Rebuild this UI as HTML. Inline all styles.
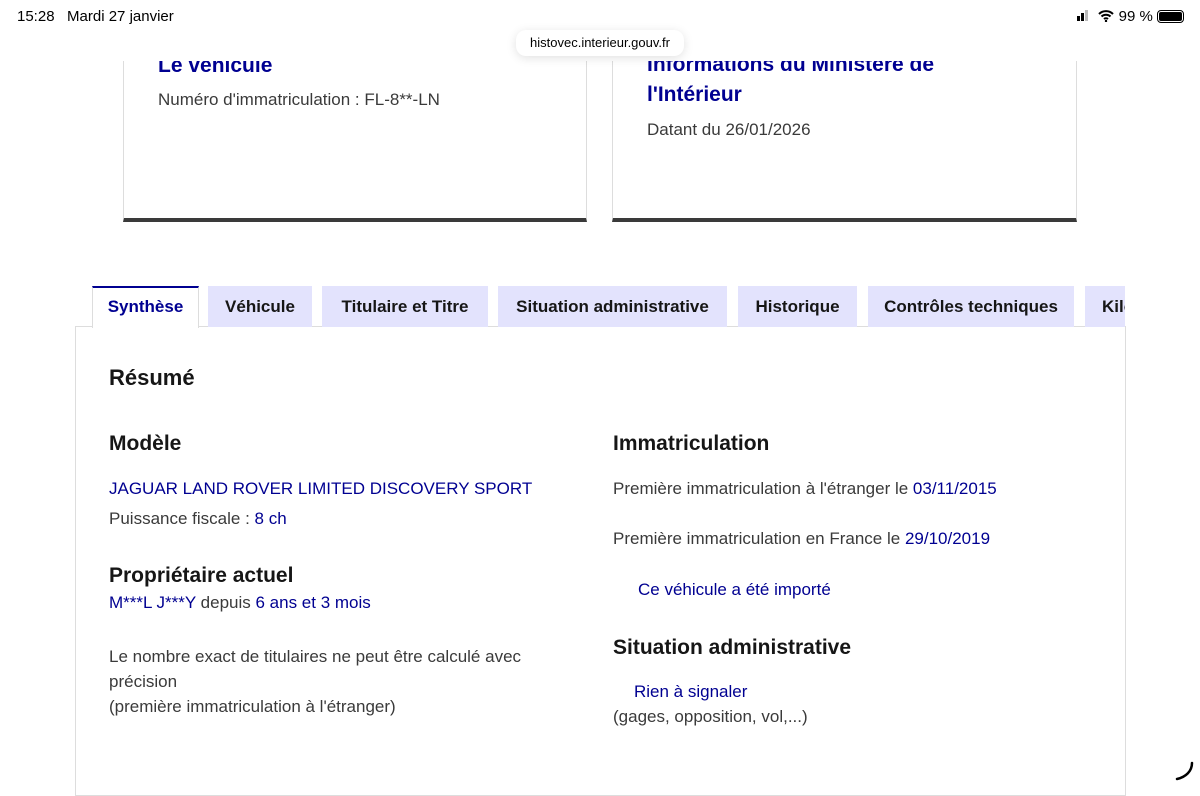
<!DOCTYPE html>
<html><head><meta charset="utf-8"><style>
*{margin:0;padding:0;box-sizing:border-box}
body{width:1200px;height:788px;overflow:hidden;background:#fff;font-family:"Liberation Sans",sans-serif;color:#3a3a3a;position:relative}
.a{position:absolute;white-space:nowrap}
.blue{color:#000091}
.card{position:absolute;top:40px;height:182px;border:1px solid #ddd;border-top:none;border-bottom:4px solid #3a3a3a;background:#fff}
.tab{position:absolute;top:286px;height:41px;background:#e3e3fd;color:#161616;font-weight:bold;font-size:17px;text-align:center;line-height:41px;overflow:hidden}
h3{font-size:21px;color:#161616;font-weight:bold}
.t{font-size:17px}
</style></head><body>
<div class="card" style="left:123px;width:464px">
<div class="a blue" style="left:34px;top:14px;font-size:21px;font-weight:bold">Le véhicule</div>
<div class="a t" style="left:34px;top:50px">Numéro d'immatriculation : FL-8**-LN</div></div>
<div class="card" style="left:612px;width:465px">
<div class="a blue" style="left:34px;top:10px;font-size:21px;font-weight:bold;line-height:30px;white-space:normal;width:330px">Informations du Ministère de l'Intérieur</div>
<div class="a t" style="left:34px;top:80px">Datant du 26/01/2026</div></div>
<div class="a" style="left:0;top:0;width:1200px;height:61px;background:#fff"></div>
<div class="a" style="left:17px;top:8px;font-size:15px;color:#000">15:28&nbsp;&nbsp; Mardi 27 janvier</div>
<div class="a" style="right:16px;top:8px;font-size:15px;color:#000">
<span style="display:inline-block;width:3px;height:5px;background:#000;margin-right:1px"></span><span style="display:inline-block;width:3px;height:8px;background:#000;margin-right:1px"></span><span style="display:inline-block;width:3px;height:11px;background:#bbb;margin-right:6px"></span>
<svg width="16" height="12" viewBox="0 0 16 12" style="vertical-align:-1px"><path d="M1 4a10 10 0 0 1 14 0M3.5 6.5a6.5 6.5 0 0 1 9 0M6 9a3 3 0 0 1 4 0" stroke="#000" stroke-width="2" fill="none"/><circle cx="8" cy="11" r="1.2"/></svg>
99 % <span style="display:inline-block;width:27px;height:13px;border:1.5px solid #000;border-radius:4px;vertical-align:-2px;padding:1px"><span style="display:block;height:100%;background:#000;border-radius:2px"></span></span></div>
<div class="a" style="left:516px;top:30px;width:168px;height:26px;background:#fff;border-radius:10px;box-shadow:0 2px 10px rgba(0,0,0,.12);font-size:13px;color:#000;text-align:center;line-height:26px">histovec.interieur.gouv.fr</div>
<div class="a" style="left:75px;top:326px;width:1051px;height:470px;border:1px solid #ddd"></div>
<div class="tab" style="left:92px;width:107px;background:#fff;color:#000091;border-top:2px solid #000091;border-left:1px solid #ddd;border-right:1px solid #ddd;height:42px;line-height:38px">Synthèse</div>
<div class="tab" style="left:208px;width:104px">Véhicule</div>
<div class="tab" style="left:322px;width:166px">Titulaire et Titre</div>
<div class="tab" style="left:498px;width:229px">Situation administrative</div>
<div class="tab" style="left:738px;width:119px">Historique</div>
<div class="tab" style="left:868px;width:206px">Contrôles techniques</div>
<div class="tab" style="left:1085px;width:40px;text-align:left;padding-left:17px">Kilométrage</div>
<h3 class="a" style="left:109px;top:365px;font-size:22px">Résumé</h3>
<h3 class="a" style="left:109px;top:432px">Modèle</h3>
<div class="a t blue" style="left:109px;top:479px">JAGUAR LAND ROVER LIMITED DISCOVERY SPORT</div>
<div class="a t" style="left:109px;top:509px">Puissance fiscale : <span class="blue">8 ch</span></div>
<h3 class="a" style="left:109px;top:564px">Propriétaire actuel</h3>
<div class="a t" style="left:109px;top:593px"><span class="blue">M***L J***Y</span> depuis <span class="blue">6 ans et 3 mois</span></div>
<div class="a t" style="left:109px;top:644px;line-height:25px">Le nombre exact de titulaires ne peut être calculé avec<br>précision<br>(première immatriculation à l'étranger)</div>
<h3 class="a" style="left:613px;top:432px">Immatriculation</h3>
<div class="a t" style="left:613px;top:479px">Première immatriculation à l'étranger le <span class="blue">03/11/2015</span></div>
<div class="a t" style="left:613px;top:529px">Première immatriculation en France le <span class="blue">29/10/2019</span></div>
<div class="a t blue" style="left:638px;top:580px">Ce véhicule a été importé</div>
<h3 class="a" style="left:613px;top:636px">Situation administrative</h3>
<div class="a t blue" style="left:634px;top:682px">Rien à signaler</div>
<div class="a t" style="left:613px;top:707px">(gages, opposition, vol,...)</div>
<svg class="a" style="left:1172px;top:760px" width="24" height="24" viewBox="0 0 24 24"><path d="M20 3c0 8-6 14-15 16" stroke="#000" stroke-width="2.5" fill="none" stroke-linecap="round"/></svg>
</body></html>
